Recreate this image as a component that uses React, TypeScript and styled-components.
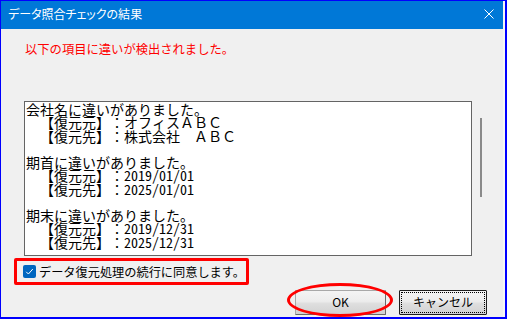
import React from "react";
import styled, { createGlobalStyle } from "styled-components";

const Global = createGlobalStyle`
  html, body { margin: 0; padding: 0; background: #ffffff; }
  body {
    font-family: "Noto Sans CJK JP", "Noto Sans", sans-serif;
    text-spacing-trim: space-all;
  }
`;

const Frame = styled.div`
  box-sizing: border-box;
  width: 507px;
  height: 319px;
  border-left: 1px solid #0000ff;
  border-top: 1px solid #0000ff;
  border-right: 2px solid #0000ff;
  border-bottom: 2px solid #0000ff;
  padding-right: 2px;
  background: #f7f7f7;
  display: flex;
  flex-direction: column;
`;

const TitleBar = styled.div`
  box-sizing: border-box;
  height: 28px;
  flex: none;
  background: #0078d7;
  color: #ffffff;
  display: flex;
  align-items: center;
  justify-content: space-between;
  padding: 0 9px 3px 7px;
`;

const TitleText = styled.span`
  font-family: "Noto Sans CJK JP", sans-serif;
  font-size: 12px;
  line-height: 14px;
  font-feature-settings: "palt";
`;

const CloseIcon = styled.svg`
  width: 10px;
  height: 10px;
  display: block;
`;

const Body = styled.div`
  flex: 1;
  background: #f0f0f0;
  display: flex;
  flex-direction: column;
`;

const Message = styled.div`
  margin: 14px 0 0 24px;
  color: #ff0000;
  font-family: "Noto Sans CJK JP", sans-serif;
  font-size: 12.3px;
  line-height: 12px;
  white-space: nowrap;
`;

const TextRow = styled.div`
  display: flex;
  margin: 46px 0 0 23px;
`;

const TextBox = styled.div`
  box-sizing: border-box;
  width: 448px;
  height: 155px;
  border: 1px solid #646464;
  background: #ffffff;
  padding: 1px 0 0 1px;
  font-family: "Noto Sans Mono CJK JP", "Noto Sans CJK JP", monospace;
  font-size: 14px;
  line-height: 13.25px;
  color: #000000;
  white-space: pre;
  text-spacing-trim: space-all;
`;

const ScrollThumb = styled.div`
  width: 2px;
  height: 79px;
  margin: 17px 0 0 8px;
  background: #8a8a8a;
`;

const CheckGroup = styled.label`
  box-sizing: border-box;
  width: 235px;
  height: 27px;
  margin: 2px 0 0 13px;
  border: 3px solid #ff0000;
  border-radius: 2px;
  display: flex;
  align-items: center;
  gap: 3px;
  padding-left: 6px;
`;

const CheckBox = styled.span`
  box-sizing: border-box;
  flex: none;
  width: 13px;
  height: 13px;
  border-radius: 2px;
  background: #0067c0;
  display: flex;
  align-items: center;
  justify-content: center;
`;

const CheckLabel = styled.span`
  font-family: "Noto Sans CJK JP", sans-serif;
  font-size: 12.2px;
  line-height: 14px;
  color: #000000;
  white-space: nowrap;
`;

const ButtonRow = styled.div`
  display: flex;
  justify-content: flex-end;
  gap: 13px;
  margin-top: 3px;
  padding-right: 16px;
`;

const ButtonWrap = styled.div`
  position: relative;
`;

const Button = styled.button<{ $w: number; $focused?: boolean }>`
  position: relative;
  box-sizing: border-box;
  width: ${(p) => p.$w}px;
  height: 25px;
  padding: 0;
  border: 1px solid;
  border-color: ${(p) =>
    p.$focused ? "#1e1e1e" : "#a8a8a8 #6a6a6a #6a6a6a #a8a8a8"};
  border-radius: 1px;
  background: linear-gradient(to bottom, #f4f4f4 0%, #ececec 45%, #dedede 55%, #d2d2d2 100%);
  font-family: "Noto Sans CJK JP", sans-serif;
  font-weight: 400;
  font-size: 12px;
  line-height: 14px;
  color: #000000;
  &::after {
    content: "";
    display: ${(p) => (p.$focused ? "block" : "none")};
    position: absolute;
    inset: 1px;
    border: 1px dotted #000000;
  }
`;

const Ellipse = styled.span`
  position: absolute;
  left: -8px;
  top: -5px;
  width: 106px;
  height: 34px;
  box-sizing: border-box;
  border: 3px solid #ff0000;
  border-radius: 50%;
  pointer-events: none;
`;

const lines = [
  "会社名に違いがありました。",
  "　【復元元】：オフィスＡＢＣ",
  "　【復元先】：株式会社　ＡＢＣ",
  "",
  "期首に違いがありました。",
  "　【復元元】：2019/01/01",
  "　【復元先】：2025/01/01",
  "",
  "期末に違いがありました。",
  "　【復元元】：2019/12/31",
  "　【復元先】：2025/12/31",
];

export default function App() {
  return (
    <>
      <Global />
      <Frame>
        <TitleBar>
          <TitleText>データ照合チェックの結果</TitleText>
          <CloseIcon viewBox="0 0 10 10">
            <path d="M0.5 0.5 L9.5 9.5 M9.5 0.5 L0.5 9.5" stroke="#ffffff" strokeWidth="1" fill="none" />
          </CloseIcon>
        </TitleBar>
        <Body>
          <Message>以下の項目に違いが検出されました。</Message>
          <TextRow>
            <TextBox>{lines.join("\n")}</TextBox>
            <ScrollThumb />
          </TextRow>
          <CheckGroup>
            <CheckBox>
              <svg width="9" height="9" viewBox="0 0 9 9">
                <path d="M1.2 4.8 L3.4 7 L7.8 2" stroke="#ffffff" strokeWidth="1" fill="none" />
              </svg>
            </CheckBox>
            <CheckLabel>データ復元処理の続行に同意します。</CheckLabel>
          </CheckGroup>
          <ButtonRow>
            <ButtonWrap>
              <Button $w={91}>OK</Button>
              <Ellipse />
            </ButtonWrap>
            <ButtonWrap>
              <Button $w={88} $focused>
                キャンセル
              </Button>
            </ButtonWrap>
          </ButtonRow>
        </Body>
      </Frame>
    </>
  );
}
